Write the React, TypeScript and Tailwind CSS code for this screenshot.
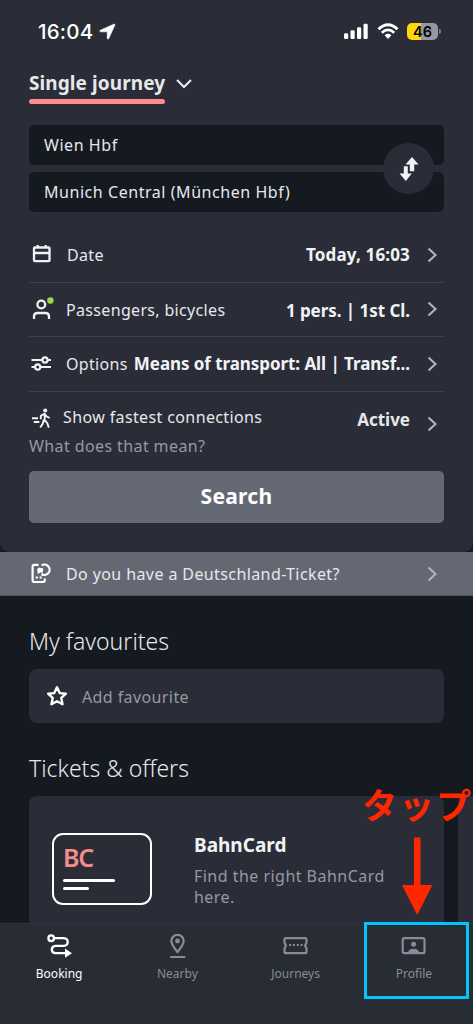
import type { ReactNode } from "react";

export default function App() {
  return (
    <div className="relative flex h-[1024px] w-[473px] flex-col overflow-hidden bg-[#151920] font-['Noto_Sans',sans-serif] text-[#e6e8eb]">
      <section className="h-[552px] shrink-0 rounded-b-[9px] bg-[#2a2d37] px-[29px]">
        <StatusBar />

        <div className="flex h-[41px] items-start">
          <div className="h-[40px]">
            <h1 className="h-[35px] whitespace-nowrap pt-[4px] text-[19px] font-bold leading-[30px] tracking-[0.08px]">
              Single journey
            </h1>
            <div className="h-[5px] w-[136px] rounded-full bg-[#ff8c8c]" />
          </div>
          <svg className="ml-[10px] mt-[14px] h-[12px] w-[18px]" viewBox="0 0 18 12" fill="none">
            <path d="M2 2l7 7 7-7" stroke="#e6e8eb" strokeWidth="2.2" />
          </svg>
        </div>

        <div className="relative mt-[20px] grid gap-[7px] text-[16px] tracking-[0.55px]">
          <div className="flex h-[40px] items-center rounded-[5px] bg-[#151920] px-[15px]">
            Wien Hbf
          </div>
          <div className="flex h-[40px] items-center rounded-[5px] bg-[#151920] px-[15px]">
            Munich Central (München Hbf)
          </div>
          <button className="absolute right-[10px] top-[18px] flex h-[51px] w-[51px] items-center justify-center rounded-full bg-[#2a2d37]">
            <SwapIcon />
          </button>
        </div>

        <div className="mt-[16px]">
          <Row icon={<CalendarIcon />} label="Date" labelClass="ml-[13px]" value="Today, 16:03" valueClass="tracking-[0.15px]" />
          <Row
            icon={<PersonIcon />}
            label="Passengers, bicycles"
            labelClass="ml-[12px] pt-[2px]"
            value="1 pers. | 1st Cl."
            valueClass="pt-[2px] tracking-[-0.05px]"
          />
          <Row
            icon={<SlidersIcon />}
            label="Options"
            labelClass="ml-[12px]"
            value="Means of transport: All | Transf..."
            valueClass="tracking-[-0.07px]"
          />
        </div>

        <div className="flex h-[79px] justify-between">
          <div>
            <div className="mt-[13px] flex h-[25px] items-center text-[16px]">
              <WalkIcon />
              <span className="ml-[9px] whitespace-nowrap tracking-[0.38px]">Show fastest connections</span>
            </div>
            <p className="mt-[4px] text-[16px] leading-[25px] tracking-[0.4px] text-[#9699a1]">
              What does that mean?
            </p>
          </div>
          <div className="flex">
            <span className="mt-[15px] text-[17px] font-bold leading-[25px]">Active</span>
            <Chevron className="ml-[17px] mt-[24px]" />
          </div>
        </div>

        <button className="h-[52px] w-full rounded-[5px] bg-[#646973] text-[21px] font-bold tracking-[0.3px] text-white">
          Search
        </button>
      </section>

      <div className="flex h-[44px] shrink-0 items-center border-b border-[#4b4f59] bg-[#656872] px-[29px] text-[16px]">
        <TicketSyncIcon />
        <span className="ml-[12px] whitespace-nowrap pt-px tracking-[0.4px]">
          Do you have a Deutschland-Ticket?
        </span>
        <Chevron className="ml-auto" />
      </div>

      <section className="px-[29px]">
        <h2 className="mt-[30px] text-[23px] font-light leading-[30px]">My favourites</h2>
        <div className="mt-[13px] flex h-[54px] items-center rounded-[8px] bg-[#2a2d37] pl-[17px]">
          <StarIcon />
          <span className="ml-[14px] pt-px text-[16px] tracking-[0.4px] text-[#9699a1]">
            Add favourite
          </span>
        </div>
        <h2 className="mt-[30px] text-[23px] font-light leading-[30px]">Tickets &amp; offers</h2>
      </section>

      <div className="mt-[13px] flex h-[127px] gap-[14px] overflow-hidden pl-[29px]">
        <div className="flex w-[415px] shrink-0 rounded-t-[8px] bg-[#2a2d37] pl-[23px]">
          <div className="mt-[37px] h-[72px] w-[100px] rounded-[11px] border-2 border-white pl-[9px] pt-[6px]">
            <div className="h-[31px] text-[25px] font-semibold leading-[32px] tracking-[-1.2px] text-[#f58b8b]">
              BC
            </div>
            <div className="mt-[7px] h-[3px] w-[52px] rounded-full bg-white" />
            <div className="mt-[5px] h-[3px] w-[26px] rounded-full bg-white" />
          </div>
          <div className="ml-[42px] mt-[36px]">
            <h3 className="text-[19px] font-bold leading-[26px] text-[#f0f3f5]">BahnCard</h3>
            <p className="mt-[8px] w-[205px] text-[16px] leading-[21px] tracking-[0.47px] text-[#9699a1]">
              Find the right BahnCard here.
            </p>
          </div>
        </div>
        <div className="w-[40px] shrink-0 bg-[#2a2d37]" />
      </div>

      <nav className="grid h-[101px] grid-cols-4 border-t border-[#30333d] bg-[#282c35] text-[12px]">
        <NavItem label="Booking" icon={<RouteIcon />} active />
        <NavItem label="Nearby" icon={<PinIcon />} />
        <NavItem label="Journeys" icon={<JourneyIcon />} />
        <NavItem label="Profile" icon={<ProfileIcon />} />
      </nav>

      {/* Callout over the profile tab */}
      <div className="absolute left-[362px] top-[779px] whitespace-nowrap font-['Noto_Sans_CJK_JP',sans-serif] text-[35px] font-bold leading-[50px] tracking-[2px] text-[#ff2600]">
        タップ
      </div>
      <svg className="absolute left-[401px] top-[836px] h-[79px] w-[32px]" viewBox="0 0 32 79">
        <path d="M13 1.500h6.500V49H31.500L16.200 79 1 49H13z" fill="#ff2600" />
      </svg>
      <div className="absolute left-[364px] top-[922px] h-[77px] w-[105px] border-[3px] border-[#00c3ff]" />
    </div>
  );
}

function StatusBar() {
  return (
    <div className="flex h-[64px] pl-[9px] text-white">
      <span className="mt-[17px] w-[56px] whitespace-nowrap font-['Inter',sans-serif] text-[20.5px] font-medium leading-[30px] tracking-[0.2px]">
        16:04
      </span>
      <svg className="ml-[5px] mt-[23px] h-[17px] w-[17px]" viewBox="0 0 17 17">
        <path
          d="M1.300 7.300L14.800 1.200q1.500-.5 1 1L9.800 15.400q-1 1.600-1.600-.1V8.800H1.600q-1.700-.5-.3-1.500z"
          fill="#fff"
          stroke="#fff"
          strokeWidth="0.6"
        />
      </svg>
      <div className="ml-auto mr-[3px] mt-[23px] flex">
        <svg className="h-[17px] w-[24px]" viewBox="0 0 24 17" fill="#fff">
          <rect x="0" y="10.300" width="4.200" height="5.700" rx="1.300" />
          <rect x="6.500" y="7.300" width="4.200" height="8.700" rx="1.300" />
          <rect x="13" y="4.300" width="4.200" height="11.700" rx="1.300" />
          <rect x="19.500" y="0.800" width="4.200" height="15.200" rx="1.300" />
        </svg>
        <svg className="ml-[9px] h-[17px] w-[22px]" viewBox="0 0 22 17" fill="none" stroke="#fff">
          <path d="M1.500 6.300Q11-2.600 20.500 6.300" strokeWidth="2.900" />
          <path d="M4.800 9.700Q11 4 17.200 9.700" strokeWidth="2.800" />
          <path d="M7.600 12.300Q11 9.400 14.400 12.300L11 16z" fill="#fff" stroke="none" />
        </svg>
        <div className="ml-[8px] flex h-[17px] w-[31px] items-center justify-center rounded-[5px] bg-linear-to-r from-[#ffd60a] from-46% to-[#95989d] to-46%">
          <span className="font-['Inter',sans-serif] text-[14.5px] font-semibold leading-[17px] text-black">
            46
          </span>
        </div>
        <div className="ml-[1px] mt-[6px] h-[5px] w-[2px] rounded-r-full bg-[#7b7e85]" />
      </div>
    </div>
  );
}

function Row({
  icon,
  label,
  labelClass,
  value,
  valueClass,
}: {
  icon: ReactNode;
  label: string;
  labelClass: string;
  value: string;
  valueClass: string;
}) {
  return (
    <div className="flex h-[54.600px] items-center whitespace-nowrap border-b border-[#3c414b] text-[16px]">
      {icon}
      <span className={`tracking-[0.33px] ${labelClass}`}>{label}</span>
      <span className={`ml-auto text-[17px] font-bold text-[#f0f3f5] ${valueClass}`}>{value}</span>
      <Chevron className="ml-[17px]" />
    </div>
  );
}

function NavItem({ label, icon, active }: { label: string; icon: ReactNode; active?: boolean }) {
  return (
    <div
      className={`flex flex-col items-center pt-[9px] ${active ? "text-white" : "text-[#878c96]"}`}
    >
      {icon}
      <span className="mt-[5px] leading-[18px]">{label}</span>
    </div>
  );
}

function Chevron({ className }: { className: string }) {
  return (
    <svg className={`mr-[6px] h-[16px] w-[11px] shrink-0 ${className}`} viewBox="0 0 11 16" fill="none">
      <path d="M1.500 1.500L8.500 8l-7 6.500" stroke="#afb4bb" strokeWidth="2.100" />
    </svg>
  );
}

function SwapIcon() {
  return (
    <svg className="h-[26px] w-[20px]" viewBox="0 0 20 26" fill="#f0f3f5">
      <path d="M13 1l6.500 7.500h-4.300v6.700h-4.400V8.500H6.500z" />
      <path d="M4.800 10.300h4v7.200h4L6.800 25 .500 17.500h4.300z" />
    </svg>
  );
}

function CalendarIcon() {
  return (
    <svg className="h-[25px] w-[25px] shrink-0" viewBox="0 0 25 25" fill="none" stroke="#f0f3f5" strokeWidth="2.300">
      <rect x="5" y="5.500" width="15.500" height="13.700" rx="1" />
      <path d="M5 11h15.500M8.700 3v3M16.700 3v3" />
    </svg>
  );
}

function PersonIcon() {
  return (
    <svg className="h-[25px] w-[25px] shrink-0" viewBox="0 0 25 25" fill="none" stroke="#f0f3f5" strokeWidth="2.300">
      <circle cx="12.300" cy="7.500" r="3.900" />
      <path d="M5 22v-2.500q0-3.500 3.500-3.500h8q3.500 0 3.500 3.500V22" />
      <circle cx="21.400" cy="3.500" r="3.200" fill="#9bd850" stroke="none" />
    </svg>
  );
}

function SlidersIcon() {
  return (
    <svg className="h-[25px] w-[25px] shrink-0" viewBox="0 0 25 25" fill="none" stroke="#f0f3f5" strokeWidth="2.200">
      <path d="M2.500 9h11M18.500 9h3.500M2.500 16h4M11.500 16h10.500" />
      <circle cx="16" cy="9" r="2.600" />
      <circle cx="8.700" cy="16" r="2.600" />
    </svg>
  );
}

function WalkIcon() {
  return (
    <svg className="h-[25px] w-[25px] shrink-0" viewBox="0 0 25 25" fill="none" stroke="#f0f3f5" strokeWidth="1.900">
      <circle cx="16.200" cy="5.400" r="2" fill="#f0f3f5" stroke="none" />
      <path d="M11.800 14.200v-3.400l3.700-2.100 2.300 2.800 2.900 1.500M15.700 8.700v6.500l2.500 2.700 1.600 4.700M14.800 14.500l-1 4.200-2.600 3.800M3 13.300h6M4.800 17h5.500" />
    </svg>
  );
}

function TicketSyncIcon() {
  return (
    <svg className="h-[25px] w-[25px] shrink-0" viewBox="0 0 25 25" fill="none" stroke="#fff" strokeWidth="2.200">
      <path d="M9.500 3.900H5.300q-1.700 0-1.700 1.700v13.700q0 1.700 1.700 1.700H13.800q2 0 2-2v-1.500" />
      <path d="M12.600 4.400a5.200 5.200 0 1 1-.2 8.600" />
      <path d="M8.200 8.300l1.800-1.800 4.300 1-.8 4.800-1.800-1-2.900 1.600z" fill="#fff" stroke="none" />
      <path d="M6.700 16.500h2.200M10.600 16.500h2.200" strokeWidth="1.900" />
    </svg>
  );
}

function StarIcon() {
  return (
    <svg className="h-[22px] w-[22px] shrink-0" viewBox="0 0 22 22" fill="none" stroke="#fff" strokeWidth="2.400" strokeLinejoin="round">
      <path d="M11 2.300l2.700 5.800 6.200.6-4.600 4.200 1.200 6.400L11 16.200l-5.500 3.100 1.200-6.400L2.100 8.700l6.200-.6z" />
    </svg>
  );
}

function RouteIcon() {
  return (
    <svg className="h-[27px] w-[27px]" viewBox="0 0 27 27" fill="none" stroke="currentColor" strokeWidth="2.300">
      <circle cx="5.200" cy="5.200" r="2.800" />
      <path d="M8 5.200h9.700q4 .3 4 3.800t-4 3.800H9.500q-3.700.3-3.700 3.700t3.700 3.700H20" />
      <path d="M19 15.500l7 4.700-7 4.500z" fill="currentColor" stroke="none" />
    </svg>
  );
}

function PinIcon() {
  return (
    <svg className="h-[27px] w-[27px]" viewBox="0 0 27 27" fill="none" stroke="currentColor" strokeWidth="2.200">
      <path d="M13.500 19Q7.300 11.500 7.300 8a6.200 6.200 0 0 1 12.400 0q0 3.500-6.200 11z" />
      <circle cx="13.500" cy="8" r="2.400" fill="currentColor" stroke="none" />
      <path d="M7 24h13.500" strokeLinecap="round" />
    </svg>
  );
}

function JourneyIcon() {
  return (
    <svg className="h-[27px] w-[27px]" viewBox="0 0 27 27" fill="none" stroke="currentColor" strokeWidth="2.200">
      <path d="M3.700 5.200h19.600q1.200 0 1.200 1.200V9.500l-1.400 3 1.400 3v3.500q0 1.200-1.200 1.200H3.700q-1.200 0-1.200-1.200v-3.500l1.400-3-1.400-3V6.400q0-1.200 1.200-1.200z" />
      <path d="M7.200 12h2M11 12h2M14.800 12h2M18.600 12h2" strokeWidth="2" />
    </svg>
  );
}

function ProfileIcon() {
  return (
    <svg className="h-[27px] w-[27px]" viewBox="0 0 27 27" fill="none" stroke="currentColor" strokeWidth="2.200">
      <rect x="2.700" y="5.200" width="21.800" height="15" rx="1.500" />
      <circle cx="13.600" cy="11.300" r="2.500" fill="currentColor" stroke="none" />
      <path d="M8 20.500q0-4.800 5.600-4.800t5.600 4.800z" fill="currentColor" stroke="none" />
    </svg>
  );
}
